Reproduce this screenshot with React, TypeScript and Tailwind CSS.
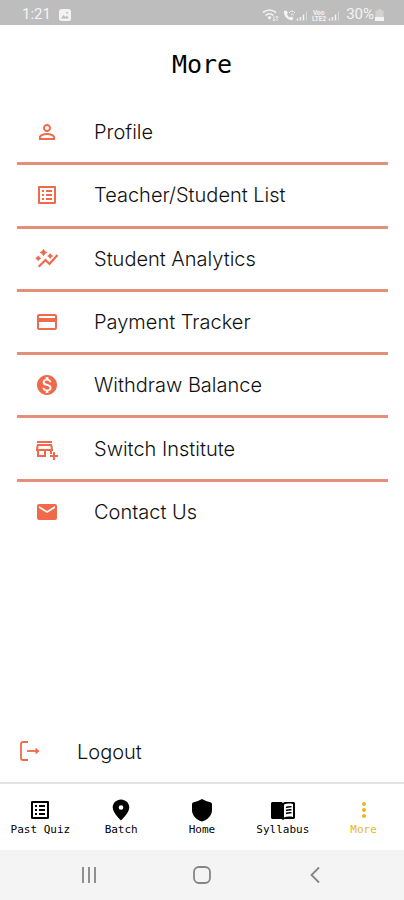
import type { ComponentType } from "react";
import {
  MdOutlineListAlt,
  MdPermIdentity,
  MdPayment,
  MdMonetizationOn,
  MdOutlineAddBusiness,
  MdEmail,
  MdMoreVert,
} from "react-icons/md";

type Icon = ComponentType<{ className?: string }>;

function AnalyticsIcon({ className }: { className?: string }) {
  return (
    <svg viewBox="0 0 24 24" className={className} aria-hidden="true">
      <path d="M8.500 1.800L10 4L12.200 5.500L10 7L8.500 9.200L7 7L4.800 5.500L7 4ZM3.200 8.300L4.400 10.100L6.200 11.300L4.400 12.500L3.200 14.300L2 12.500L.2 11.300L2 10.100ZM15.200 6L16.400 7.800L18.200 9L16.400 10.200L15.200 12L14 10.200L12.200 9L14 7.800Z" fill="currentColor" />
      <path d="M3.700 19.800L10.500 13L14.500 17L22.500 8" fill="none" stroke="currentColor" strokeWidth="2.200" />
    </svg>
  );
}

function PinIcon({ className }: { className?: string }) {
  return (
    <svg viewBox="0 0 24 24" className={className} aria-hidden="true">
      <path d="M12 1.500C7.300 1.500 3.700 5.100 3.700 9.600C3.700 15 12 22.500 12 22.500S20.300 15 20.300 9.600C20.300 5.100 16.700 1.500 12 1.500ZM12 7.200A2.300 2.300 0 1 1 12 11.800A2.300 2.300 0 1 1 12 7.200Z" fill="currentColor" fillRule="evenodd" />
    </svg>
  );
}

function ShieldIcon({ className }: { className?: string }) {
  return (
    <svg viewBox="0 0 24 24" className={className} aria-hidden="true">
      <path d="M12 1Q16.500 3.700 21 4.500Q22 5 22 6.500V12C22 17.500 18 21.500 12 23.500C6 21.500 2 17.500 2 12V6.500Q2 5 3 4.500Q7.500 3.700 12 1Z" fill="currentColor" />
    </svg>
  );
}

function BookIcon({ className }: { className?: string }) {
  return (
    <svg viewBox="0 0 24 24" className={className} aria-hidden="true">
      <path d="M0 5.500C0 4.600 .7 4 1.600 4H10.500L12 5L13.500 4H22.400C23.300 4 24 4.600 24 5.500V19.500C24 20.300 23.300 21 22.400 21H13.500L12 22L10.500 21H1.600C.7 21 0 20.300 0 19.500Z" fill="currentColor" />
      <path d="M13 6.500C15.500 5.300 19 5.300 22 6V19C19 18.400 15.500 18.400 13 19.500Z" fill="white" />
      <path d="M15 9.500Q17.500 8.500 20.500 8.800M15 12.500Q17.500 11.500 20.500 11.800M15 15.500Q17.500 14.500 20.500 14.800" fill="none" stroke="currentColor" strokeWidth="1.600" />
    </svg>
  );
}

const menu: { label: string; Icon: Icon }[] = [
  { label: "Profile", Icon: MdPermIdentity },
  { label: "Teacher/Student List", Icon: MdOutlineListAlt },
  { label: "Student Analytics", Icon: AnalyticsIcon },
  { label: "Payment Tracker", Icon: MdPayment },
  { label: "Withdraw Balance", Icon: MdMonetizationOn },
  { label: "Switch Institute", Icon: MdOutlineAddBusiness },
  { label: "Contact Us", Icon: MdEmail },
];

const tabs: { label: string; Icon: Icon; active?: boolean }[] = [
  { label: "Past Quiz", Icon: MdOutlineListAlt },
  { label: "Batch", Icon: PinIcon },
  { label: "Home", Icon: ShieldIcon },
  { label: "Syllabus", Icon: BookIcon },
  { label: "More", Icon: MdMoreVert, active: true },
];

function StatusBar() {
  return (
    <div className="flex h-[25px] shrink-0 items-center justify-between bg-[#bdbdbd] pt-1 pr-5 pl-[22px] font-['Roboto',sans-serif] text-[15px] text-[#f3f3f3]">
      <div className="flex items-center gap-2">
        <span>1:21</span>
        <svg viewBox="0 0 12 12" className="size-3" aria-hidden="true">
          <rect width="12" height="12" rx="2.500" fill="currentColor" />
          <path d="M2 9.500L4.500 6L6.500 8L8 6.500L10 9.500Z" fill="#bdbdbd" />
          <circle cx="8" cy="3.800" r="1" fill="#bdbdbd" />
        </svg>
      </div>
      <div className="flex items-center gap-1">
        <svg viewBox="0 0 80 14" className="h-3.5 w-20" fill="none" stroke="currentColor" aria-hidden="true">
          <path d="M1 4.500Q7.500 -.5 14 4.500M3.500 7.500Q7.500 4 11.500 7.500" strokeWidth="1.600" />
          <path d="M5.500 9L7.500 12L9.500 9Q7.500 7.500 5.500 9Z" fill="currentColor" stroke="none" />
          <path d="M12 8V13M10.500 11.500L12 13L13.500 11.500M15 13V8M13.700 9.500L15 8L16.300 9.500" strokeWidth=".8" />
          <path d="M22 3C21 7 25 12 30 12.500L31.500 10L29 8.500L27.500 9.500Q25.500 8 25 6L26 5L24.500 2.500Z" fill="currentColor" stroke="none" />
          <path d="M27 5Q30 1 33 5M29 7Q30.500 5 32 7" strokeWidth="1" />
          <path d="M35.500 12.500V10.500M38.500 12.500V9M41.500 12.500V6.500" strokeWidth="1.500" />
          <path d="M44.500 12.500V3.500" strokeWidth="1" opacity=".5" />
          <text x="51" y="6.500" fontSize="6.500" fontWeight="700" fill="currentColor" stroke="none">Voo</text>
          <text x="50" y="13" fontSize="6.500" fontWeight="700" fill="currentColor" stroke="none">LTE2</text>
          <path d="M67.500 12.500V10.500M70.500 12.500V9M73.500 12.500V6.500" strokeWidth="1.500" />
          <path d="M76.500 12.500V3.500" strokeWidth="1" opacity=".5" />
        </svg>
        <div className="flex items-center gap-px">
          <span>30%</span>
          <svg viewBox="0 0 9 12" className="h-3 w-[9px]" aria-hidden="true">
            <path d="M3 0H6V1.500H8.500V12H.5V1.500H3Z" fill="currentColor" opacity=".4" />
            <path d="M0 8H9V12H0Z" fill="currentColor" />
          </svg>
        </div>
      </div>
    </div>
  );
}

export default function App() {
  return (
    <div className="flex min-h-screen flex-col bg-white font-['Inter',sans-serif] text-[#111111]">
      <StatusBar />
      <main className="flex flex-1 flex-col">
        <h1 className="pt-6 text-center font-['DejaVu_Sans_Mono',monospace] text-[25px] leading-8 text-black">More</h1>
        <ul className="mt-[21px] mr-4 ml-[17px] grid h-[443px] auto-rows-fr">
          {menu.map(({ label, Icon }) => (
            <li key={label} className="flex border-b-[3px] border-[#e58e78] last:border-transparent">
              <button type="button" className="flex flex-1 items-center gap-[35px] pl-[18px] text-left">
                <Icon className="size-6 text-[#f0694a]" />
                <span className="text-xl font-light">{label}</span>
              </button>
            </li>
          ))}
        </ul>
        <button type="button" className="mt-auto mb-3 flex items-center gap-[35px] pl-[18px] text-left">
          <svg viewBox="0 0 24 24" className="size-6 text-[#f0694a]" fill="none" stroke="currentColor" strokeWidth="1.800" aria-hidden="true">
            <path d="M10 2H5Q3 2 3 4V18Q3 20 5 20H10" />
            <path d="M9 11H20" />
            <path d="M17.500 7.500L21.500 11L17.500 14.500Z" fill="currentColor" stroke="none" />
          </svg>
          <span className="text-xl leading-9 font-light">Logout</span>
        </button>
      </main>
      <nav className="grid h-[68px] shrink-0 grid-cols-5 border-t-2 border-[#e2e2e2] bg-white">
        {tabs.map(({ label, Icon, active }) => (
          <button
            key={label}
            type="button"
            className={
              active
                ? "flex flex-col items-center pt-3.5 text-[#edb51c]"
                : "flex flex-col items-center pt-3.5 text-black"
            }
          >
            <Icon className="size-6" />
            <span className="font-['DejaVu_Sans_Mono',monospace] text-[11px] leading-4">{label}</span>
          </button>
        ))}
      </nav>
      <div className="flex h-[50px] shrink-0 items-center justify-around bg-[#f4f4f4] px-8 text-[#858585]">
        <button type="button" aria-label="Recent apps">
          <svg viewBox="0 0 18 18" className="size-[18px]" stroke="currentColor" strokeWidth="1.800">
            <path d="M3 1V17M9 1V17M15 1V17" />
          </svg>
        </button>
        <button type="button" aria-label="Home screen">
          <svg viewBox="0 0 18 18" className="size-[18px]" fill="none" stroke="currentColor" strokeWidth="1.800">
            <rect x="1" y="1" width="16" height="16" rx="5" />
          </svg>
        </button>
        <button type="button" aria-label="Back">
          <svg viewBox="0 0 18 18" className="size-[18px]" fill="none" stroke="currentColor" strokeWidth="1.800">
            <path d="M13 1.500L5.500 9L13 16.500" />
          </svg>
        </button>
      </div>
    </div>
  );
}
